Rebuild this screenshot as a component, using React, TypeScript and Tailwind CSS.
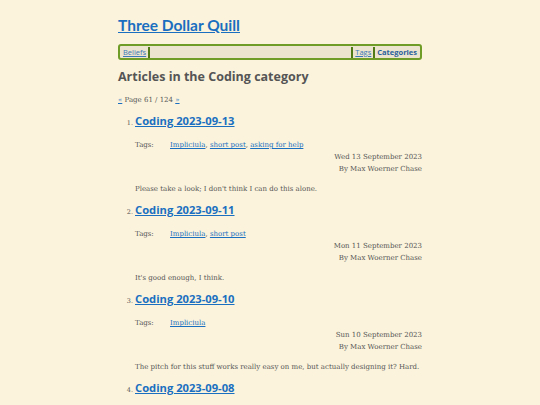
import React from "react";

type Post = {
  n: number;
  title: string;
  tags: string[];
  date: string;
  summary: string;
};

const posts: Post[] = [
  {
    n: 1,
    title: "Coding 2023-09-13",
    tags: ["Impliciula", "short post", "asking for help"],
    date: "Wed 13 September 2023",
    summary: "Please take a look; I don't think I can do this alone.",
  },
  {
    n: 2,
    title: "Coding 2023-09-11",
    tags: ["Impliciula", "short post"],
    date: "Mon 11 September 2023",
    summary: "It's good enough, I think.",
  },
  {
    n: 3,
    title: "Coding 2023-09-10",
    tags: ["Impliciula"],
    date: "Sun 10 September 2023",
    summary: "The pitch for this stuff works really easy on me, but actually designing it? Hard.",
  },
  {
    n: 4,
    title: "Coding 2023-09-08",
    tags: ["Impliciula"],
    date: "Fri 8 September 2023",
    summary: "More work.",
  },
];

const sans = "font-['Open_Sans','Noto_Sans',sans-serif]";
const head = "font-['Lato','Open_Sans',sans-serif]";
const serif = "font-['DejaVu_Serif','Liberation_Serif',serif]";

function Entry({ post }: { post: Post }) {
  return (
    <li className="flex flex-col">
      <div className="flex items-baseline">
        <span className={`${serif} w-[17px] text-right pr-[2px] text-[6.5px] text-[#555]`}>{post.n}.</span>
        <a href="#" className={`${sans} text-[11.2px] font-bold text-[#1a6fc0] underline leading-[18px]`}>
          {post.title}
        </a>
      </div>
      <div className={`${serif} pl-[17px] text-[7px] text-[#555]`}>
        <div className="flex mt-[9px] leading-[12px]">
          <span className="w-[35px]">Tags:</span>
          <span>
            {post.tags.map((t, i) => (
              <span key={t}>
                <a href="#" className="text-[#1a6fc0] underline">{t}</a>
                {i < post.tags.length - 1 ? ", " : ""}
              </span>
            ))}
          </span>
        </div>
        <div className="text-right leading-[12px]">{post.date}</div>
        <div className="text-right leading-[12px]">By Max Woerner Chase</div>
        <p className="mt-[8px] leading-[12px]">{post.summary}</p>
      </div>
    </li>
  );
}

export default function App() {
  return (
    <div className="min-h-[405px] bg-[#fbf3dc] overflow-hidden">
      <div className="w-[304px] mx-auto pt-[12px]">
        <h1 className={`${head} text-[15.5px] font-bold leading-[26px]`}>
          <a href="#" className="text-[#1a6fc0] underline">Three Dollar Quill</a>
        </h1>
        <nav className={`${sans} mt-[6px] flex h-[16px] items-center rounded-[3px] border-2 border-[#6f9c26] bg-[#ece4cf] px-[2px] text-[7.5px] leading-[12px]`}>
          <a href="#" className="text-[#3a78b8] underline px-[1px]">Beliefs</a>
          <span className="mx-[1px] h-[11px] w-[2px] bg-[#4f7a16]" />
          <span className="flex-1" />
          <span className="mx-[1px] h-[11px] w-[2px] bg-[#4f7a16]" />
          <a href="#" className="text-[#3a78b8] underline px-[1px]">Tags</a>
          <span className="mx-[1px] h-[11px] w-[2px] bg-[#4f7a16]" />
          <span className="font-bold text-[#2a5f9a] px-[1px]">Categories</span>
        </nav>
        <h2 className={`${sans} mt-[8px] text-[12.5px] font-bold text-[#555] leading-[18px]`}>
          Articles in the Coding category
        </h2>
        <div className={`${serif} mt-[8px] text-[7px] text-[#555] leading-[12px]`}>
          <a href="#" className="text-[#1a6fc0] underline">«</a> Page 61 / 124{" "}
          <a href="#" className="text-[#1a6fc0] underline">»</a>
        </div>
        <ol className="mt-[6px] flex flex-col gap-[6px]">
          {posts.map((p) => (
            <Entry key={p.n} post={p} />
          ))}
        </ol>
      </div>
    </div>
  );
}
